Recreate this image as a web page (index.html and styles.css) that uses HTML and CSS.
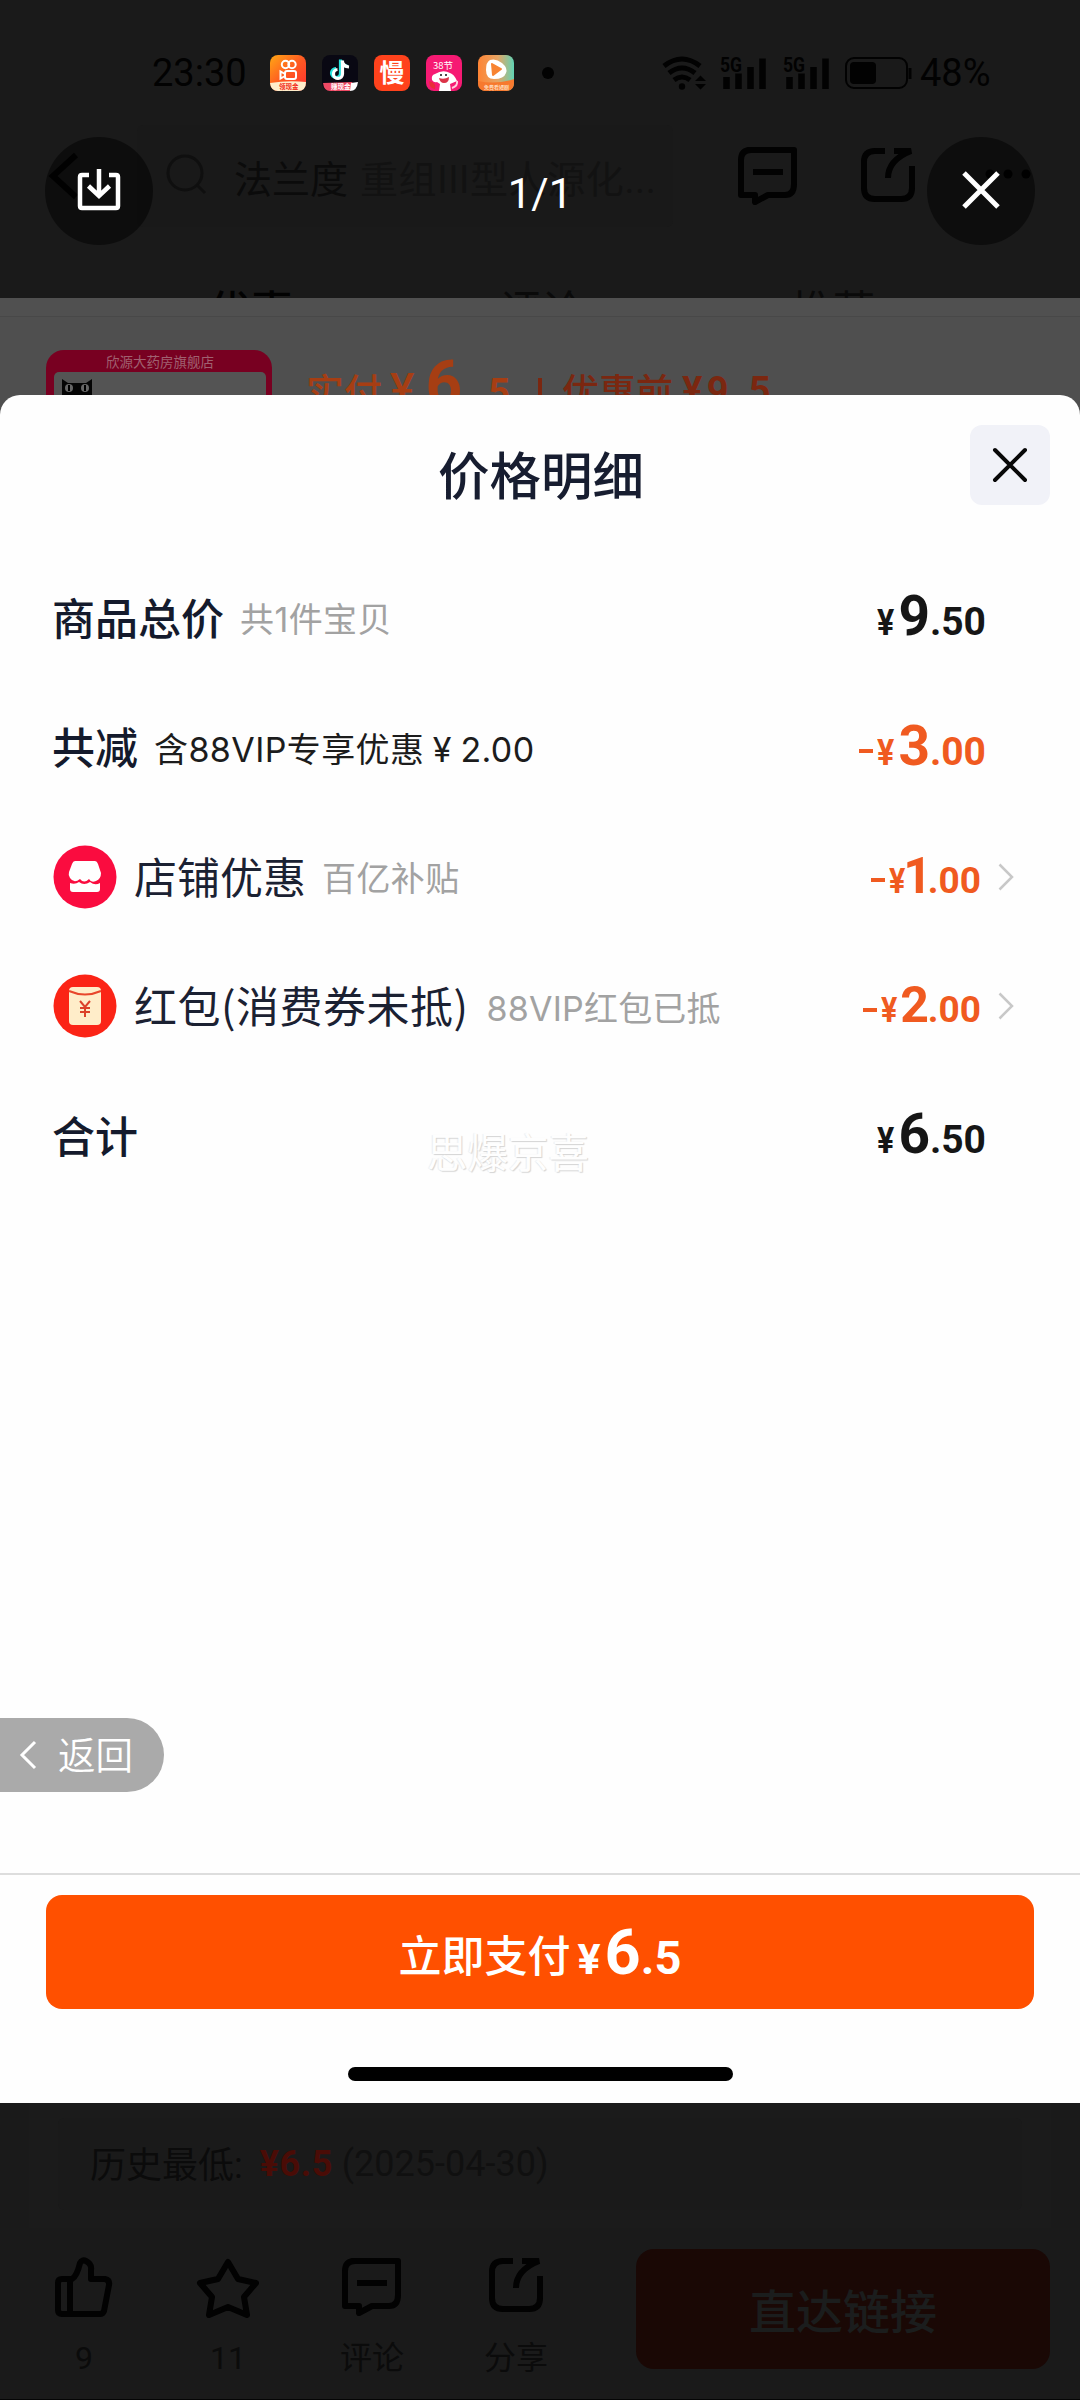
FILE: index.html
```html
<!DOCTYPE html>
<html lang="zh-CN">
<head>
<meta charset="utf-8">
<title>价格明细</title>
<link rel="stylesheet" href="styles.css">
</head>
<body>
<svg class="defs" width="0" height="0">
  <defs>
    <symbol id="chat" viewBox="0 0 60 58"><path d="M10 3H56V37Q56 48 47 48H30L17 55V48H3V13Q3 3 13 3Z" fill="none" stroke="#020202" stroke-width="6" stroke-linejoin="round"/><path d="M15 25H45" stroke="#020202" stroke-width="6"/></symbol>
    <symbol id="share" viewBox="0 0 54 54"><path d="M24 3H14Q3 3 3 14V40Q3 51 14 51H40Q51 51 51 40V18" fill="none" stroke="#020202" stroke-width="6"/><path d="M33 3H50Q27 12 27 30" fill="none" stroke="#020202" stroke-width="6"/></symbol>
    <symbol id="signal" viewBox="0 0 48 34"><text x="0" y="15.500" class="net" textLength="22" lengthAdjust="spacingAndGlyphs">5G</text><path d="M6.500 33V21M18.500 33V17.500M30.500 33V11M42.500 33V2.500" stroke="#020202" stroke-width="6.500"/></symbol>
    <symbol id="next" viewBox="0 0 16 28"><path d="M1.500 1.500L14 14L1.500 26.500" fill="none" stroke="#c8c8c8" stroke-width="2.500"/></symbol>
  </defs>
</svg>

<header class="top">
  <div class="status">
    <span class="clock">23:30</span>
    <div class="apps">
      <svg viewBox="0 0 36 36"><defs><linearGradient id="ks" x2="1" y2="1"><stop stop-color="#ffa814"/><stop offset=".5" stop-color="#ff5a22"/><stop offset="1" stop-color="#ff3030"/></linearGradient></defs><rect width="36" height="36" rx="8" fill="url(#ks)"/><g fill="none" stroke="#fff" stroke-width="2"><circle cx="15.500" cy="9.500" r="3.700"/><circle cx="22" cy="9.500" r="3.700"/><rect x="15" y="16" width="11" height="8" rx="2"/><path d="M15 19L10.500 16.500V23.500L15 21"/></g><path d="M0 28Q18 25 36 27Q36 36 28 36H8Q1 36 0 28Z" fill="#ffeecb"/><text x="9" y="34" class="tag red">领现金</text></svg>
      <svg viewBox="0 0 36 36"><rect width="36" height="36" rx="8" fill="#090813"/><g fill="none" stroke-width="3.200"><path d="M18.500 4.500V18A4.500 4.500 0 1 1 14 13.500M18.500 5Q20 11 26 11.500" stroke="#28e5e0"/><path d="M20.500 5.500V19A4.500 4.500 0 1 1 15.500 14.500M20 6Q21.500 11.500 27 12" stroke="#fff"/></g><path d="M1 28L30 27Q33 31 28 36H8Q2 36 1 28Z" fill="#ee4964"/><path d="M29 28L36 27Q35 36 28 36Z" fill="#fff"/><text x="9" y="34" class="tag">赚现金</text></svg>
      <svg viewBox="0 0 36 36"><rect width="36" height="36" rx="8" fill="#ff421c"/><text x="5.500" y="27" class="man">慢</text></svg>
      <svg viewBox="0 0 36 36"><rect width="36" height="36" rx="8" fill="#f61a73"/><text x="7" y="14" class="day">38节</text><path d="M9 19Q5 20 6 25Q8 28 11 27L14 29L13 36H25L24 29L31 26Q28 19 24 18Q17 14 9 19Z" fill="#fff"/><path d="M13 23Q18 25 23 22Q23 28 18 28Q14 28 13 23Z" fill="#dc3348"/><circle cx="15" cy="20" r="1" fill="#111"/><circle cx="20" cy="20" r="1" fill="#111"/><path d="M3 26Q11 28 9 34Q3 33 3 26Z" fill="#e72d39"/><path d="M26 33Q32 31 31 26" stroke="#ffd0dc" stroke-width="2" fill="none"/></svg>
      <svg viewBox="0 0 36 36"><defs><linearGradient id="vd" x1="0" x2="1"><stop stop-color="#ff8434"/><stop offset=".55" stop-color="#e6a565"/><stop offset="1" stop-color="#60d3b5"/></linearGradient></defs><rect width="36" height="36" rx="8" fill="url(#vd)"/><path d="M12 5Q18 3 24 8Q30 13 28 18Q26 24 16 24Q8 24 8 15Q8 7 12 5Z" fill="#fff"/><path d="M14 9L23 14L15 20Z" fill="#f88432" stroke="#f88432" stroke-width="2" stroke-linejoin="round"/><path d="M0 26Q18 30 36 24V28Q36 36 28 36H8Q0 36 0 28Z" fill="#f7792e"/><text x="6" y="33.500" class="tag pale">免费看短剧</text></svg>
    </div>
    <i class="dot"></i>
    <div class="sys">
      <svg width="44" height="34" viewBox="0 0 44 34"><g fill="none" stroke="#020202" stroke-width="5"><path d="M2 10Q20-4 38 10"/><path d="M7 17Q20 7 33 17"/><path d="M12 24Q20 18 28 24"/></g><circle cx="20" cy="30.500" r="3.200" fill="#020202"/><path d="M33 25L38.500 19.500L44 25ZM33 28H44L38.500 33.500Z" fill="#020202"/></svg>
      <svg class="sig" width="48" height="34"><use href="#signal"/></svg>
      <svg class="sig two" width="48" height="34"><use href="#signal"/></svg>
      <svg class="bat" width="67" height="32" viewBox="0 0 67 32"><rect x="1" y="1" width="61" height="30" rx="8" fill="none" stroke="#020202" stroke-width="2"/><rect x="5" y="5" width="26" height="22" rx="4" fill="#020202"/><path d="M65 11V22" stroke="#020202" stroke-width="3"/></svg>
      <span class="pct">48%</span>
    </div>
  </div>
  <nav class="bar">
    <svg class="back" width="28" height="46" viewBox="0 0 28 46"><path d="M26 2L3 23L26 44" fill="none" stroke="#020202" stroke-width="6"/></svg>
    <div class="search">
      <svg width="42" height="42" viewBox="0 0 42 42"><circle cx="19" cy="19" r="17" fill="none" stroke="#0f0f0f" stroke-width="3"/><path d="M31 31L39 39" stroke="#0f0f0f" stroke-width="3"/></svg>
      <span class="term">法兰度</span><span class="hint">重组III型人源化...</span>
    </div>
    <svg class="nchat" width="60" height="58"><use href="#chat"/></svg>
    <svg class="nshare" width="54" height="54"><use href="#share"/></svg>
    <svg class="more" width="46" height="10" viewBox="0 0 46 10"><circle cx="5" cy="5" r="4.500"/><circle cx="23" cy="5" r="4.500"/><circle cx="41" cy="5" r="4.500"/></svg>
  </nav>
  <div class="tabs"><b>优惠</b><b class="dim">评论</b><b class="dim">推荐</b></div>
  <div class="round save"><svg width="44" height="44" viewBox="0 0 44 44"><path d="M12 7H5Q3 7 3 9V38Q3 40 5 40H39Q41 40 41 38V9Q41 7 39 7H32" fill="none" stroke="#fff" stroke-width="4.500"/><path d="M22 1V28M11.500 18L22 28L32.500 18" fill="none" stroke="#fff" stroke-width="4.500"/></svg></div>
  <div class="count">1/1</div>
  <div class="round close"><svg width="38" height="38" viewBox="0 0 38 38"><path d="M2 2L36 36M36 2L2 36" stroke="#fff" stroke-width="5"/></svg></div>
</header>

<main class="photo">
  <section class="order">
    <div class="thumb">
      <div class="shop">欣源大药房旗舰店</div>
      <div class="goods"><svg width="32" height="26" viewBox="0 0 32 26"><path d="M1 0L7 4H25L31 0V26H1Z" fill="#050505"/><circle cx="8" cy="9" r="4" fill="#666"/><circle cx="24" cy="9" r="4" fill="#666"/><path d="M8 6V12M24 6V12" stroke="#000" stroke-width="2"/></svg></div>
    </div>
    <div class="paid"><span class="pt">实付</span><span class="py">¥</span><span class="p6">6</span><span class="pd">.5</span></div>
    <div class="was"><i></i><span>优惠前</span><b>¥9.5</b></div>
  </section>

  <section class="sheet">
    <div class="head"><h1>价格明细</h1><div class="x"><svg width="36" height="36" viewBox="0 0 36 36"><path d="M3 3L33 33M33 3L3 33" stroke="#080808" stroke-width="4" stroke-linecap="round"/></svg></div></div>
    <div class="row"><b class="name">商品总价</b><span class="sub">共1件宝贝</span><span class="price"><i>¥</i><em>9</em><s>.50</s></span></div>
    <div class="row"><b class="name">共减</b><span class="sub dark">含88VIP专享优惠<span class="yen">¥</span>2.00</span><span class="price cut"><u></u><i>¥</i><em>3</em><s>.00</s></span></div>
    <div class="row link"><svg class="badge" viewBox="0 0 64 64"><circle cx="32" cy="32" r="31.500" fill="#fa0c3f"/><path d="M22 16H42Q44 16 45 19L48 28Q48 34 43 36Q38 38 36 34Q31 39 27 34Q21 39 17 33Q15 30 16 27L19 19Q20 16 22 16Z" fill="#fff"/><path d="M17 38Q22 40 26 37Q31 41 37 37Q42 41 47 38V44Q47 47 44 47H20Q17 47 17 44Z" fill="#fff"/></svg><span class="name">店铺优惠</span><span class="sub">百亿补贴</span><span class="price cut"><u></u><i>¥</i><em class="one">1</em><s>.00</s></span><svg class="next" width="16" height="28"><use href="#next"/></svg></div>
    <div class="row link"><svg class="badge" viewBox="0 0 64 64"><circle cx="32" cy="32" r="31.500" fill="#fb2416"/><rect x="16" y="13" width="32" height="38" rx="4" fill="#ffedc9"/><path d="M16 17Q32 24 48 17" fill="none" stroke="#e8462b" stroke-width="2"/><path d="M27 27L32 33L37 27M32 33V43M27 34H37M27 38H37" fill="none" stroke="#dc4129" stroke-width="2"/></svg><span class="name wide">红包(消费券未抵)</span><span class="sub far">88VIP红包已抵</span><span class="price cut"><u></u><i>¥</i><em>2</em><s>.00</s></span><svg class="next" width="16" height="28"><use href="#next"/></svg></div>
    <div class="row"><b class="name">合计</b><span class="price"><i>¥</i><em>6</em><s>.50</s></span><span class="mark">思爆京喜</span></div>
    <div class="return"><svg width="18" height="30" viewBox="0 0 18 30"><path d="M16 2L3 15L16 28" fill="none" stroke="#fff" stroke-width="3"/></svg><span>返回</span></div>
    <footer class="pay"><div class="paybtn"><span>立即支付</span><i>¥</i><em>6</em><s>.5</s></div><div class="home"></div></footer>
  </section>
</main>

<footer class="bottom">
  <div class="panel"><div class="low"><span>历史最低:</span><b>¥6.5</b><small>(2025-04-30)</small></div></div>
  <div class="acts">
    <div class="act"><svg width="58" height="60" viewBox="0 0 58 60"><path d="M7 21H17Q22 18 25 5Q27 1 31 3Q37 6 36 12V21H50Q55 22 54 27L49 53Q48 56 45 56H7Q3 56 3 52V25Q3 21 7 21ZM15 21V56" fill="none" stroke="#020202" stroke-width="6" stroke-linejoin="round"/></svg><span>9</span></div>
    <div class="act"><svg width="64" height="62" viewBox="0 0 64 62"><path d="M32 4L42 21L60 25L48 39L51 57L32 49L13 57L16 39L4 25L22 21Z" fill="none" stroke="#020202" stroke-width="6" stroke-linejoin="round"/></svg><span>11</span></div>
    <div class="act"><svg width="60" height="58"><use href="#chat"/></svg><span>评论</span></div>
    <div class="act"><svg width="54" height="54"><use href="#share"/></svg><span>分享</span></div>
    <div class="go">直达链接</div>
  </div>
</footer>
</body>
</html>
```
FILE: styles.css
```css
* { box-sizing: border-box; }
body { margin: 0; width: 1080px; height: 2400px; overflow: hidden; background: #1a1a1a; font-family: Roboto, "Noto Sans CJK SC", sans-serif; color: #020202; display: flex; flex-direction: column; }
svg { display: block; flex: none; overflow: visible; }
span, b, i, em, s, u, small { font-style: normal; text-decoration: none; white-space: nowrap; }
.defs { position: absolute; }

/* dimmed page behind the viewer */
.top { position: relative; height: 298px; overflow: hidden; flex: none; display: flex; flex-direction: column; }
.status { height: 108px; flex: none; padding: 38px 0 0 152px; display: flex; align-items: center; }
.clock { font-size: 38px; width: 118px; }
.apps { display: flex; gap: 16px; }
.apps svg { width: 36px; height: 36px; overflow: hidden; }
.dot { width: 12px; height: 12px; border-radius: 6px; background: #020202; margin-left: 28px; }
.sys { display: flex; align-items: center; margin-left: 108px; }
.sig { margin-left: 14px; }
.two { margin-left: 15px; }
.net { font: bold 20px Roboto, sans-serif; fill: #020202; }
.bat { margin-left: 14px; }
.pct { font-size: 38px; margin-left: 8px; }
.tag { font: bold 6.500px "Noto Sans CJK SC", sans-serif; fill: #fff; }
.red { fill: #f22b20; }
.pale { fill: #ffd9b8; font-size: 5px; }
.man { font: bold 25px "Noto Sans CJK SC", sans-serif; fill: #fff; }
.day { font: 9.500px "Noto Sans CJK SC", sans-serif; fill: #fff; }
.bar { height: 138px; flex: none; display: flex; align-items: center; padding: 0 0 2px 50px; }
.search { width: 536px; height: 102px; margin-left: 59px; padding-left: 29px; display: flex; align-items: center; background: #191919; border-radius: 6px; font-size: 38px; color: #0b0b0b; }
.search svg { margin-top: -2px; }
.term { margin-left: 26px; }
.hint { margin-left: 12px; color: #121212; letter-spacing: .6px; }
.nchat { margin: 0 0 0 65px; }
.nshare { margin: -2px 0 0 63px; }
.more { margin: -4px 0 0 70px; }
.tabs { display: flex; flex: none; margin-top: 36px; padding-left: 209px; gap: 207px; font-size: 42px; line-height: 60px; }
.tabs b { font-weight: 500; width: 84px; }
.tabs .dim { font-weight: 400; color: #0a0a0a; }
.round { position: absolute; top: 137px; width: 108px; height: 108px; border-radius: 50%; background: rgba(0,0,0,.5); display: flex; align-items: center; justify-content: center; }
.save { left: 45px; }
.save svg { margin-top: -3px; }
.close { left: 927px; }
.close svg { margin-top: -2px; }
.count { position: absolute; left: 0; right: 0; top: 167px; text-align: center; color: #fff; font-size: 42px; line-height: 54px; }

/* photographed order page */
.photo { height: 1805px; flex: none; background: #4f4f4f; display: flex; flex-direction: column; }
.order { height: 97px; border-top: 18px solid #505050; box-shadow: inset 0 1px #484848; overflow: hidden; display: flex; padding-left: 46px; }
.thumb { width: 226px; height: 120px; margin-top: 34px; border-radius: 18px 18px 0 0; background: #780021; padding: 0 6px 0 8px; flex: none; }
.shop { height: 22px; color: #a06070; text-align: center; font-size: 13.500px; line-height: 24px; }
.goods { height: 98px; background: #545454; border-radius: 5px 5px 0 0; padding: 7px; }
.paid { display: flex; align-items: baseline; color: #a63e13; margin: 34px 0 0 34px; height: 90px; line-height: 70px; }
.pt { font-size: 38px; font-weight: 500; }
.py { font-size: 46px; font-weight: 500; margin-left: 8px; }
.p6 { font-size: 64px; font-weight: 700; margin-left: 11px; }
.pd { font-size: 38px; font-weight: 700; margin-left: 9px; letter-spacing: 6px; }
.was { display: flex; align-items: flex-start; color: #7b2710; font-size: 37px; font-weight: 500; margin: 54px 0 0 22px; line-height: 48px; }
.was i { width: 4px; height: 30px; margin-top: 8px; background: #7b2710; margin-right: 20px; }
.was b { margin-left: 9px; letter-spacing: 4.500px; font-size: 38px; line-height: 43px; }

/* price sheet */
.sheet { height: 1708px; background: #fefefe; border-radius: 20px 20px 0 0; display: flex; flex-direction: column; }
.head { height: 157px; position: relative; }
h1 { margin: 0; padding: 41px 0 0 2px; text-align: center; font: 500 51.500px/74px "Noto Sans CJK SC", sans-serif; color: #171d30; }
.x { position: absolute; left: 970px; top: 30px; width: 80px; height: 80px; border-radius: 12px; background: #f1f2f8; display: flex; align-items: center; justify-content: center; }
.row { height: 129.500px; display: flex; align-items: center; padding: 0 94px 0 52px; position: relative; line-height: 60px; }
.link { padding-right: 66px; }
.name { font: 400 43px/60px "Noto Sans CJK SC", sans-serif; color: #1b2132; margin-top: -2px; }
b.name { font-weight: 500; color: #141a2c; }
.wide { letter-spacing: .500px; }
.sub { font: 400 34px/60px Inter, "Noto Sans CJK SC", sans-serif; color: #a2a2a2; margin-left: 16px; padding-top: 7px; letter-spacing: .4px; }
.dark { color: #1c1c1c; }
.yen { display: inline-block; width: 36px; text-align: center; }
.far { margin-left: 18px; letter-spacing: .2px; }
.badge { width: 64px; height: 64px; margin: 2px 18px 0 1px; }
.badge + .name { margin-left: -1px; }
.price { margin-left: auto; display: flex; align-items: baseline; color: #161616; font-weight: 700; line-height: 60px; padding-top: 6px; }
.price i { font-size: 37px; width: 21px; transform: scaleX(.87); transform-origin: 0; }
.price em { font-size: 55px; }
.price s { font-size: 39px; }
.cut { color: #f05a20; }
.price u { width: 14px; height: 4px; background: #f05a20; align-self: center; margin: 3px 4px 0 0; }
.link .price i { font-size: 35px; }
.link .price em { font-size: 50px; margin-left: -2px; margin-right: -1px; }
.link .price .one { margin-left: -7px; margin-right: -4px; }
.link .price s { font-size: 37px; }
.next { margin: 2px 0 0 17px; }
.mark { position: absolute; left: 427px; top: 51px; font: 40.500px/60px "Noto Sans CJK SC", sans-serif; color: #fefefe; text-shadow: 1px 1px 1px #d4d4d4, -1px 0 1px #eee; }
.return { width: 164px; height: 74px; margin-top: 518px; background: #aaa; border-radius: 0 37px 37px 0; display: flex; align-items: center; padding-left: 19px; color: #fff; font: 350 37.500px/54px "Noto Sans CJK SC", sans-serif; }
.return span { margin-left: 21px; padding-bottom: 3px; }
.pay { margin-top: auto; height: 230px; border-top: 2px solid #ddd; padding: 20px 46px 0; }
.paybtn { height: 114px; background: #ff5000; border-radius: 16px; color: #fff; font: 500 43px/112px Roboto, "Noto Sans CJK SC", sans-serif; display: flex; align-items: baseline; justify-content: center; }
.paybtn i, .paybtn em, .paybtn s { transform: translateY(2px); }
.paybtn i { font-weight: 700; width: 27px; margin-left: 7px; }
.paybtn em { font-size: 63px; font-weight: 700; }
.paybtn s { font-weight: 700; font-size: 47px; }
.home { width: 385px; height: 14px; border-radius: 7px; background: #000; margin: 58px auto 0; }

/* dimmed page footer */
.bottom { flex: 1; display: flex; flex-direction: column; border-bottom: 1px solid #050505; }
.panel { height: 125px; margin: 0 29px; background: #1b1b1b; padding: 15px 29px 0; }
.low { height: 92px; background: #1a1a1a; border-radius: 6px; display: flex; align-items: center; padding-left: 32px; font-size: 36px; color: #0b0b0b; }
.low span { font-size: 36px; margin-top: -5px; }
.low b { color: #4a0c06; margin-left: 17px; font-weight: 700; letter-spacing: .500px; }
.low small { color: #101010; font-size: 36px; margin-left: 9px; font-weight: 400; }
.acts { display: flex; height: 171px; padding: 21px 0 0 12px; align-items: flex-start; }
.act { width: 144px; height: 131px; padding-top: 9px; display: flex; flex-direction: column; align-items: center; justify-content: space-between; font-size: 32px; line-height: 44px; color: #0b0b0b; }
.go { width: 414px; height: 120px; margin-left: 48px; border-radius: 18px; background: #1a0805; color: #1b1d1d; font: 500 47px/120px "Noto Sans CJK SC", sans-serif; text-align: center; }
```
